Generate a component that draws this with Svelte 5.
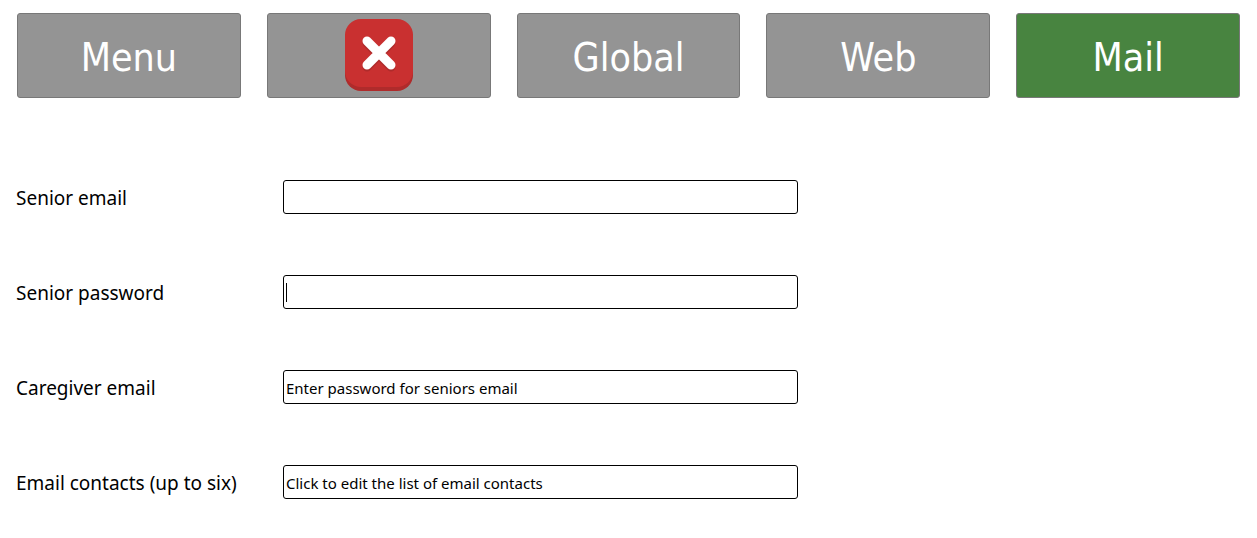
<script>
  const tabs = [
    { name: 'Menu' },
    { name: 'Close', icon: true },
    { name: 'Global' },
    { name: 'Web' },
    { name: 'Mail', active: true }
  ];

  let fields = $state([
    { id: 'senior-email', label: 'Senior email', type: 'email', value: '' },
    { id: 'senior-password', label: 'Senior password', type: 'password', value: '', caret: true },
    { id: 'caregiver-email', label: 'Caregiver email', type: 'text', value: 'Enter password for seniors email' },
    { id: 'contacts', label: 'Email contacts (up to six)', type: 'text', value: 'Click to edit the list of email contacts' }
  ]);
</script>

<nav class="tabs">
  {#each tabs as tab}
    <button type="button" class="tab" class:active={tab.active} aria-label={tab.name}>
      {#if tab.icon}
        <svg class="close" viewBox="0 0 68 72" aria-hidden="true">
          <rect y="4" width="68" height="68" rx="16" fill="#af2b2b" />
          <rect width="68" height="68" rx="16" fill="#c93030" />
          <path d="M22 24 46 48M46 24 22 48" stroke="#af2b2b" stroke-width="9" stroke-linecap="round" />
          <path d="M22 22 46 46M46 22 22 46" stroke="#fff" stroke-width="9" stroke-linecap="round" />
        </svg>
      {:else}
        {tab.name}
      {/if}
    </button>
  {/each}
</nav>

<form class="settings">
  {#each fields as field}
    <div class="row">
      <label for={field.id}>{field.label}</label>
      <div class="box">
        <input id={field.id} type={field.type} autocomplete="off" bind:value={field.value} />
        {#if field.caret}<span class="caret"></span>{/if}
      </div>
    </div>
  {/each}
</form>

<style>
  :global(body) {
    background: #fff;
    color: #000;
    font-family: "Noto Sans", sans-serif;
  }

  .tabs {
    display: grid;
    grid-template-columns: repeat(5, 1fr);
    gap: 26px;
    padding: 13px 17px 0;
  }

  .tab {
    display: flex;
    align-items: center;
    justify-content: center;
    height: 85px;
    padding: 4px 0 0;
    border: 1px solid #787878;
    border-radius: 3px;
    background: #949494;
    color: #fff;
    font-family: Tahoma, "DejaVu Sans Condensed", "Noto Sans", sans-serif;
    font-size: 39px;
    line-height: 48px;
  }

  .tab.active {
    background: #488440;
  }

  .close {
    width: 68px;
    height: 72px;
    margin-bottom: 6px;
    fill: none;
  }

  .settings {
    display: flex;
    flex-direction: column;
    gap: 61px;
    padding: 82px 16px 0;
  }

  .row {
    display: grid;
    grid-template-columns: 267px minmax(0, 515px);
    align-items: center;
  }

  label {
    padding-top: 2px;
    font-size: 19px;
    line-height: 24px;
  }

  .box {
    position: relative;
    display: flex;
  }

  input {
    box-sizing: border-box;
    width: 100%;
    height: 34px;
    padding: 2px 2px 0;
    border: 1px solid #000;
    border-radius: 3px;
    outline: none;
    background: #fff;
    color: #000;
    font-family: inherit;
    font-size: 15px;
  }

  .caret {
    position: absolute;
    left: 3px;
    top: 8px;
    width: 1px;
    height: 19px;
    background: #000;
  }

  .box:focus-within .caret {
    display: none;
  }
</style>
